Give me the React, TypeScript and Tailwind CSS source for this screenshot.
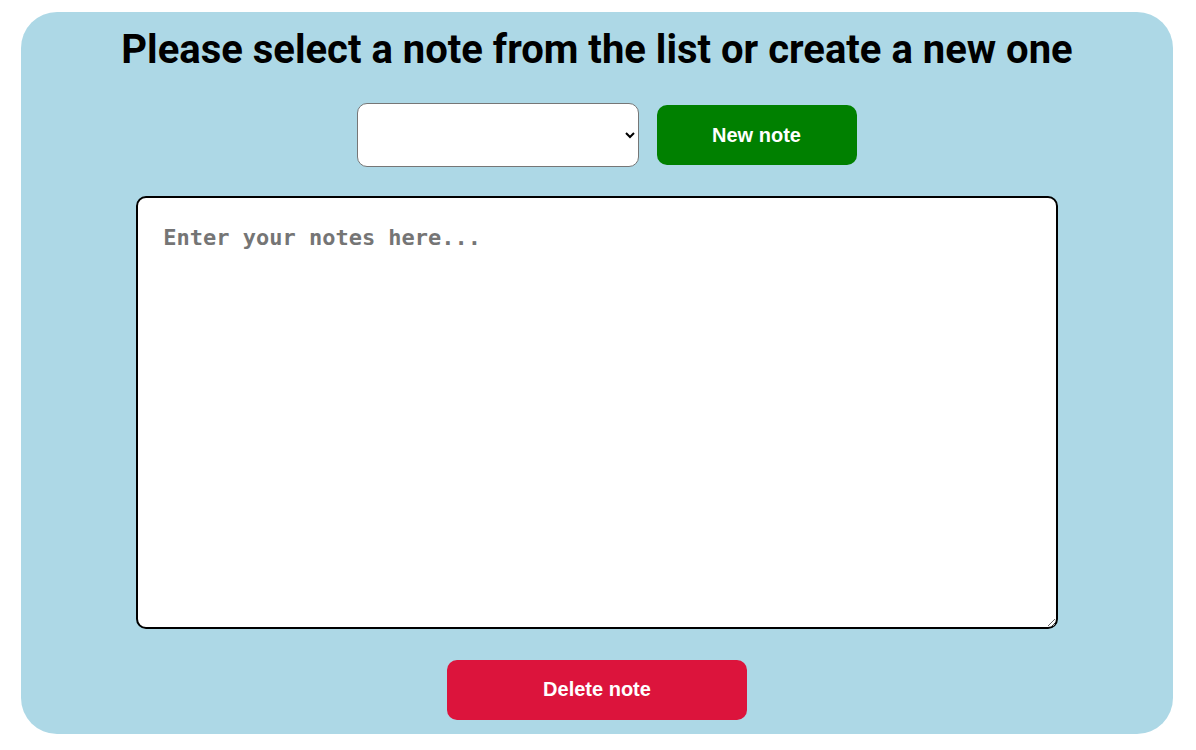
export default function App() {
  return (
    <div className="min-h-screen bg-white pt-[12px] pl-[21px]">
      <main className="flex w-[1152px] flex-col items-center rounded-[36px] bg-[#add8e6] pt-[14px] pb-[14px]">
        <h1
          className="text-[40px] leading-[47px] font-bold text-black"
          style={{ fontFamily: "Roboto, 'Liberation Sans', sans-serif" }}
        >
          Please select a note from the list or create a new one
        </h1>

        <div className="mt-[30px] ml-[19px] flex items-center gap-[18px]">
          <select className="h-[64px] w-[282px] rounded-[10px] border border-[#767676] bg-white px-2 text-black">
            <option value=""></option>
          </select>
          <button
            className="h-[60px] w-[200px] rounded-[10px] bg-[#008000] text-[20px] font-bold text-white"
            style={{ fontFamily: "'Liberation Sans', Arial, sans-serif" }}
          >
            New note
          </button>
        </div>

        <textarea
          className="mt-[29px] h-[433px] w-[80%] rounded-[10px] border-2 border-black bg-white px-[25px] py-[23px] text-[22px] font-bold text-black outline-none placeholder:text-[#757575]"
          style={{ fontFamily: "'DejaVu Sans Mono', monospace" }}
          placeholder="Enter your notes here..."
        />

        <button
          className="mt-[31px] h-[60px] w-[300px] rounded-[10px] bg-[#dc143c] pb-[2px] text-[20px] font-bold text-white"
          style={{ fontFamily: "'Liberation Sans', Arial, sans-serif" }}
        >
          Delete note
        </button>
      </main>
    </div>
  );
}
